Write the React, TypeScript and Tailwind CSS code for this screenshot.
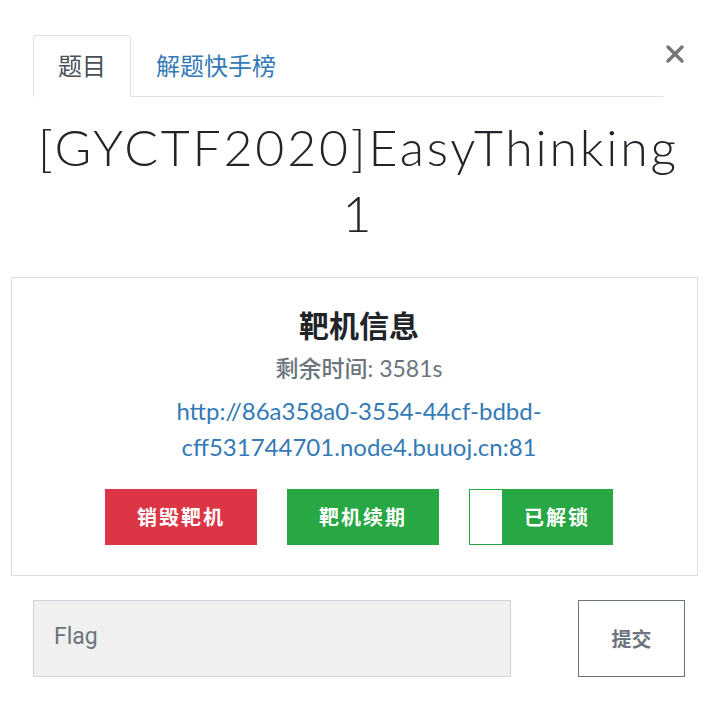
import { X } from "lucide-react";

const btnBase =
  "h-[56px] w-[152px] flex items-center justify-center text-white text-[20px] font-bold tracking-[2px]";

export default function App() {
  return (
    <div
      className="w-[709px] h-[721px] bg-white text-[#212529] overflow-hidden"
      style={{ fontFamily: "Lato, 'Noto Sans CJK SC', sans-serif" }}
    >
      <div className="pt-[35px] pl-[33px] flex items-start">
        <div className="w-[630px] flex border-b border-[#dee2e6] h-[62px]">
          <div className="h-[62px] -mb-px px-[24px] flex items-center border border-[#dee2e6] border-b-white rounded-t-[4px] bg-white text-[24px] text-[#495057]">
            题目
          </div>
          <div className="px-[25px] flex items-center text-[24px] text-[#337ab7]">
            解题快手榜
          </div>
        </div>
        <button className="ml-[-2px] mt-[5px] text-[#777777]">
          <X size={28} strokeWidth={3} />
        </button>
      </div>

      <h3 className="mt-[17px] pl-[8px] text-center text-[50px] font-light leading-[66px] tracking-[2.8px]">
        <span className="block">[GYCTF2020]EasyThinking</span>
        <span className="block">1</span>
      </h3>

      <div className="mx-[11px] mt-[31px] h-[299px] border border-[#dddddd] flex flex-col items-center pt-[27px] pl-[9px]">
        <div className="text-[30px] font-bold leading-[40px]">靶机信息</div>
        <div className="mt-[7px] text-[23px] text-[#6c757d] leading-[32px]">
          <span className="font-medium">剩余时间</span>: 3581s
        </div>
        <a
          href="#"
          className="mt-[9px] text-[24px] leading-[36px] text-[#337ab7] text-center"
        >
          http://86a358a0-3554-44cf-bdbd-
          <br />
          cff531744701.node4.buuoj.cn:81
        </a>
        <div className="mt-[24px] flex gap-[30px]">
          <div className={`${btnBase} bg-[#dc3545]`}>销毁靶机</div>
          <div className={`${btnBase} bg-[#28a745]`}>靶机续期</div>
          <div className="h-[56px] w-[144px] flex border border-[#28a745] bg-[#28a745]">
            <div className="w-[32px] bg-white" />
            <div className="flex-1 flex items-center justify-center text-white text-[20px] font-bold tracking-[2px]">
              已解锁
            </div>
          </div>
        </div>
      </div>

      <div className="mt-[24px] pl-[33px] flex items-center">
        <input
          placeholder="Flag"
          className="w-[478px] h-[77px] bg-[#f0f0f0] border border-[#ced4da] px-[20px] pb-[4px] text-[23px] placeholder:text-[#6c757d] outline-none"
          style={{ fontFamily: "Roboto, 'Liberation Sans', sans-serif" }}
        />
        <button className="ml-[67px] w-[107px] h-[77px] border border-[#6c757d] text-[#6c757d] text-[20px] font-bold bg-white">
          提交
        </button>
      </div>
    </div>
  );
}
